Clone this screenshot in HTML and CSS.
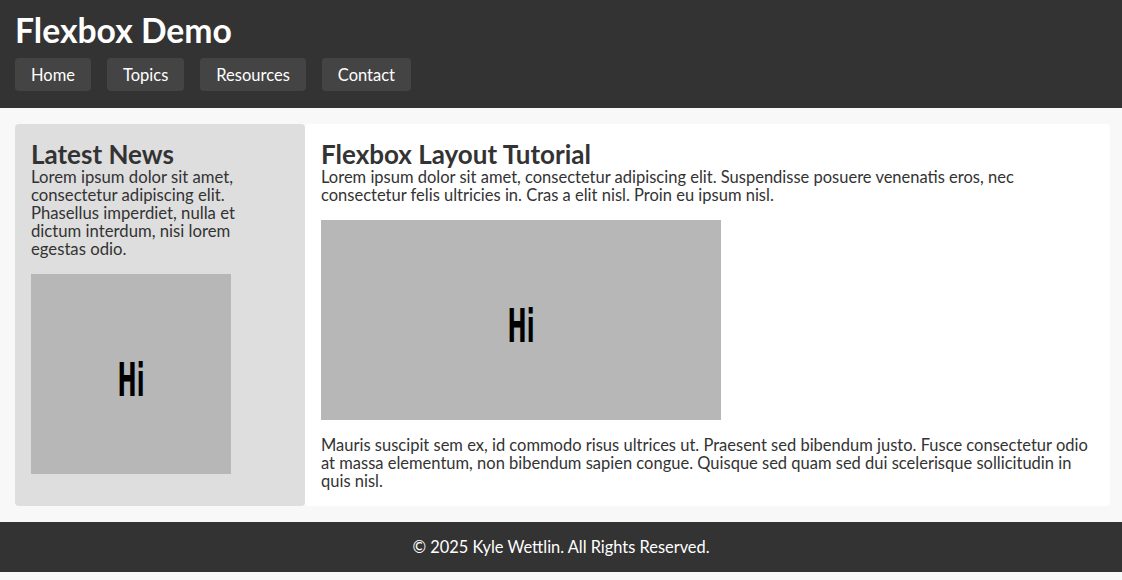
FILE: index.html
```html
<!DOCTYPE html>
<html lang="en">
<head>
<meta charset="utf-8">
<title>Flexbox Demo</title>
<link rel="stylesheet" href="styles.css">
</head>
<body>
<header class="site-header">
  <h1 class="site-title">Flexbox Demo</h1>
  <nav class="site-nav">
    <a class="nav-link" href="#">Home</a>
    <a class="nav-link" href="#">Topics</a>
    <a class="nav-link" href="#">Resources</a>
    <a class="nav-link" href="#">Contact</a>
  </nav>
</header>
<main class="layout">
  <aside class="sidebar">
    <h2 class="card-title">Latest News</h2>
    <p class="text">Lorem ipsum dolor sit amet, consectetur adipiscing elit. Phasellus imperdiet, nulla et dictum interdum, nisi lorem egestas odio.</p>
    <svg class="placeholder" width="200" height="200" viewBox="0 0 200 200">
      <rect width="200" height="200" fill="#b7b7b7"/>
      <text x="100" y="122" text-anchor="middle" class="ph-text" textLength="27" lengthAdjust="spacingAndGlyphs">Hi</text>
    </svg>
  </aside>
  <article class="content">
    <h2 class="card-title">Flexbox Layout Tutorial</h2>
    <p class="text">Lorem ipsum dolor sit amet, consectetur adipiscing elit. Suspendisse posuere venenatis eros, nec consectetur felis ultricies in. Cras a elit nisl. Proin eu ipsum nisl.</p>
    <svg class="placeholder" width="400" height="200" viewBox="0 0 400 200">
      <rect width="400" height="200" fill="#b7b7b7"/>
      <text x="200" y="122" text-anchor="middle" class="ph-text" textLength="27" lengthAdjust="spacingAndGlyphs">Hi</text>
    </svg>
    <p class="text last">Mauris suscipit sem ex, id commodo risus ultrices ut. Praesent sed bibendum justo. Fusce consectetur odio at massa elementum, non bibendum sapien congue. Quisque sed quam sed dui scelerisque sollicitudin in quis nisl.</p>
  </article>
</main>
<footer class="site-footer">
  <p class="footer-text">© 2025 Kyle Wettlin. All Rights Reserved.</p>
</footer>
</body>
</html>
```

FILE: styles.css
```css
* { box-sizing: border-box; }

body {
  margin: 0;
  background: #f8f8f8;
  font-family: Lato, "Open Sans", sans-serif;
  font-size: 16.5px;
  color: #333;
}

.site-header {
  background: #333;
  padding: 11px 15px 17px;
}

.site-title {
  margin: 0 0 9px;
  font-size: 33.7px;
  line-height: 38px;
  font-weight: 700;
  color: #fff;
}

.site-nav {
  display: flex;
  gap: 16px;
}

.nav-link {
  display: block;
  background: #444;
  color: #fff;
  text-decoration: none;
  padding: 9px 16px 7px;
  font-size: 16.5px;
  line-height: 17px;
  border-radius: 4px;
}

.layout {
  display: flex;
  padding: 16px 12px 16px 15px;
}

.sidebar {
  flex: 0 0 290px;
  background: #dedede;
  border-radius: 4px;
  padding: 16px;
  font-size: 16.7px;
}

.content {
  flex: 1;
  background: #fff;
  border-radius: 4px;
  padding: 16px;
}

.card-title {
  margin: 0;
  font-size: 26px;
  line-height: 28px;
  font-weight: 700;
  color: #333;
}

.text {
  margin: 0 0 16px;
  line-height: 18px;
}

.text.last { margin-bottom: 0; }

.placeholder {
  display: block;
  margin-bottom: 16px;
}

.ph-text {
  font-family: "DejaVu Sans", sans-serif;
  font-weight: 700;
  font-size: 46px;
  fill: #000;
}

.site-footer {
  background: #333;
  padding: 16px;
  margin-bottom: 8px;
}

.footer-text {
  margin: 0;
  text-align: center;
  color: #fff;
  font-size: 16.4px;
  line-height: 18px;
}
```
